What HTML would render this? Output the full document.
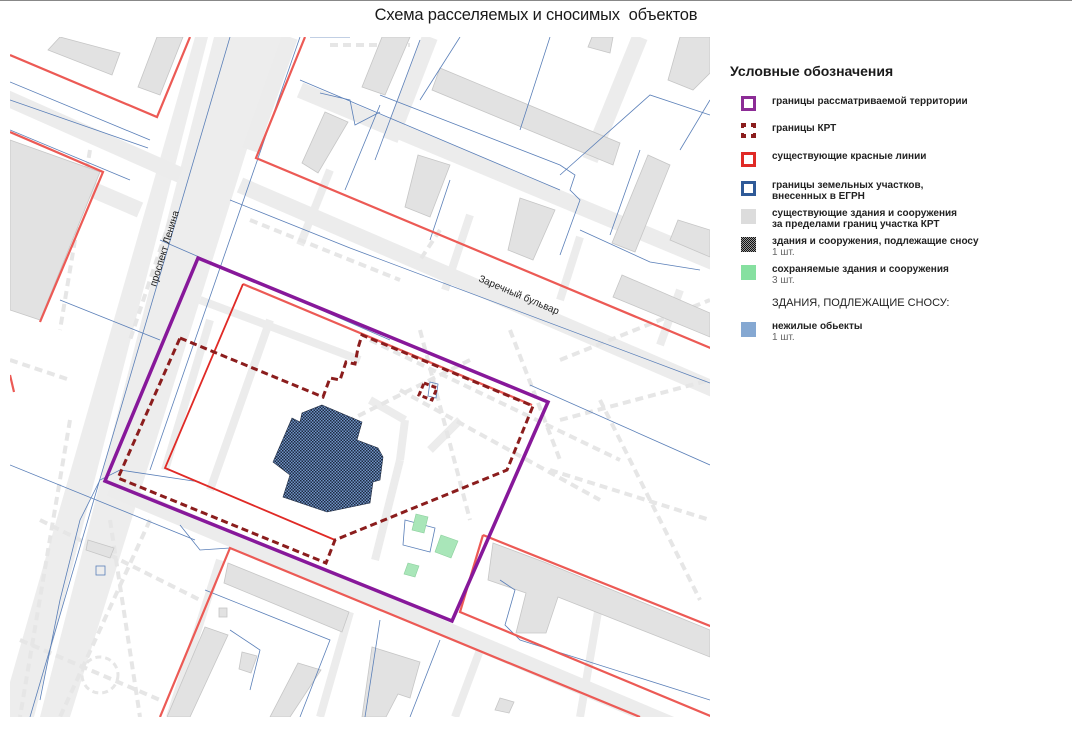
<!DOCTYPE html>
<html><head><meta charset="utf-8"><style>
html,body{margin:0;padding:0;background:#fff;width:1072px;height:738px;overflow:hidden;font-family:"Liberation Sans",sans-serif}
.t{position:absolute;left:0;width:1072px;top:6px;text-align:center;font-size:16.5px;color:#1a1a1a;letter-spacing:-0.2px}
.topline{position:absolute;left:0;top:0;width:1072px;height:1px;background:#888}
.lg{position:absolute;left:730px;top:63px;font-size:14px;color:#1a1a1a;font-weight:600}
.it{position:absolute;left:772px;font-size:10px;color:#222;line-height:11px;font-weight:600}
.it span{color:#666;font-weight:400}
.sw{position:absolute;left:741px;width:15px;height:15px;box-sizing:border-box}
</style></head><body>
<div class="topline"></div>
<div class="t">Схема расселяемых и сносимых&nbsp; объектов</div>
<svg width="1072" height="738" style="position:absolute;left:0;top:0">
<defs>
<clipPath id="c"><rect x="10" y="37" width="700" height="680"/></clipPath>
<pattern id="ch" width="3" height="3" patternUnits="userSpaceOnUse"><rect width="3" height="3" fill="#6f93c6"/><rect width="1.5" height="1.5" fill="#1e2a40"/><rect x="1.5" y="1.5" width="1.5" height="1.5" fill="#1e2a40"/></pattern>
</defs>
<g clip-path="url(#c)">
<polygon points="195,37 282,37 70,717 0,717" fill="#ededed"/>
<polygon points="208,37 214,37 40,717 34,717" fill="#fff"/>
<g stroke="#ececec" fill="none" stroke-width="16">
<line x1="240" y1="185" x2="720" y2="392"/>
<line x1="0" y1="95" x2="180" y2="175"/>
<line x1="0" y1="150" x2="140" y2="210"/>
<line x1="110" y1="488" x2="720" y2="745"/>
<line x1="290" y1="37" x2="250" y2="150"/>
<line x1="430" y1="37" x2="390" y2="140"/>
<line x1="640" y1="37" x2="590" y2="160"/>
<line x1="300" y1="90" x2="720" y2="265"/>
</g>
<g stroke="#ececec" fill="none" stroke-width="8">
<line x1="200" y1="300" x2="360" y2="360"/>
<line x1="210" y1="320" x2="165" y2="470"/>
<line x1="270" y1="320" x2="210" y2="490"/>
<line x1="370" y1="400" x2="405" y2="420"/>
<line x1="405" y1="420" x2="400" y2="460"/>
<line x1="400" y1="460" x2="375" y2="560"/>
<line x1="430" y1="450" x2="460" y2="420"/>
<line x1="470" y1="215" x2="445" y2="290"/>
<line x1="330" y1="170" x2="300" y2="245"/>
<line x1="580" y1="237" x2="560" y2="300"/>
<line x1="680" y1="290" x2="660" y2="345"/>
<line x1="220" y1="560" x2="170" y2="717"/>
<line x1="350" y1="612" x2="320" y2="717"/>
<line x1="480" y1="650" x2="455" y2="717"/>
<line x1="600" y1="600" x2="580" y2="717"/>
</g>
<g stroke="#e6e6e6" fill="none" stroke-width="4" stroke-dasharray="8 5">
<line x1="370" y1="340" x2="620" y2="460"/>
<line x1="400" y1="390" x2="600" y2="500"/>
<line x1="420" y1="330" x2="470" y2="520"/>
<line x1="510" y1="330" x2="560" y2="460"/>
<line x1="560" y1="360" x2="710" y2="300"/>
<line x1="560" y1="420" x2="710" y2="380"/>
<line x1="550" y1="470" x2="710" y2="520"/>
<line x1="600" y1="400" x2="700" y2="600"/>
<line x1="470" y1="360" x2="350" y2="420"/>
<line x1="10" y1="360" x2="70" y2="380"/>
<line x1="70" y1="420" x2="20" y2="717"/>
<line x1="40" y1="520" x2="200" y2="600"/>
<line x1="20" y1="640" x2="160" y2="700"/>
<line x1="110" y1="520" x2="140" y2="717"/>
<line x1="150" y1="520" x2="60" y2="717"/>
<line x1="90" y1="150" x2="60" y2="330"/>
<line x1="170" y1="220" x2="130" y2="340"/>
<line x1="250" y1="220" x2="400" y2="280"/>
<line x1="330" y1="45" x2="410" y2="45"/>
<line x1="440" y1="230" x2="420" y2="260"/>
</g>
<circle cx="100" cy="675" r="18" fill="none" stroke="#e6e6e6" stroke-width="3" stroke-dasharray="6 4"/>
<g fill="#e2e2e2" stroke="#c6c6c6" stroke-width="0.8">
<polygon points="10,140 100,172 40,320 10,310"/>
<polygon points="60,37 120,53 112,75 48,50"/>
<polygon points="157,37 183,37 160,95 138,87"/>
<polygon points="325,112 348,122 318,173 302,163"/>
<polygon points="382,37 410,37 385,95 362,87"/>
<polygon points="440,68 620,143 613,165 432,90"/>
<polygon points="418,155 450,165 430,217 405,207"/>
<polygon points="520,198 555,210 533,260 508,250"/>
<polygon points="592,37 613,37 610,53 588,47"/>
<polygon points="680,37 710,37 710,73 693,90 668,80"/>
<polygon points="648,155 670,165 635,252 612,243"/>
<polygon points="678,220 710,230 710,257 670,240"/>
<polygon points="622,275 710,313 710,337 613,297"/>
<polygon points="88,540 114,548 110,558 86,550"/>
<polygon points="228,563 349,612 342,632 224,583"/>
<polygon points="205,627 228,635 190,717 167,717"/>
<polygon points="298,663 321,670 290,717 270,717"/>
<polygon points="372,647 420,662 410,698 398,694 386,717 362,717"/>
<polygon points="493,543 544,562 710,630 710,657 558,597 546,633 516,633 526,593 488,580"/>
<polygon points="500,698 514,702 509,713 495,710"/>
<polygon points="242,652 257,656 251,673 239,669"/>
<rect x="219" y="608" width="8" height="9"/>
</g>
<g stroke="#5a7fb8" stroke-width="0.8" fill="none">
<line x1="230" y1="37" x2="30" y2="717"/>
<line x1="300" y1="37" x2="150" y2="470"/>
<line x1="10" y1="82" x2="150" y2="140"/>
<line x1="10" y1="100" x2="148" y2="148"/>
<line x1="10" y1="130" x2="130" y2="180"/>
<line x1="60" y1="300" x2="160" y2="340"/>
<line x1="160" y1="240" x2="390" y2="340"/>
<line x1="300" y1="80" x2="560" y2="190"/>
<line x1="350" y1="248" x2="710" y2="383"/>
<line x1="230" y1="200" x2="350" y2="248"/>
<line x1="310" y1="37" x2="350" y2="37"/>
<polyline points="320,93 350,100 355,125 380,112"/>
<line x1="380" y1="105" x2="345" y2="190"/>
<line x1="420" y1="40" x2="375" y2="160"/>
<polyline points="420,100 460,37"/>
<polyline points="380,95 560,165 575,175 570,190 580,200 560,255"/>
<line x1="520" y1="130" x2="550" y2="37"/>
<polyline points="560,175 650,95 710,115"/>
<polyline points="580,230 650,262 700,270"/>
<line x1="610" y1="235" x2="640" y2="150"/>
<line x1="450" y1="180" x2="430" y2="240"/>
<line x1="680" y1="150" x2="710" y2="100"/>
<line x1="530" y1="385" x2="710" y2="465"/>
<line x1="10" y1="465" x2="195" y2="540"/>
<polyline points="200,482 120,470 100,480 80,520 60,600 40,700"/>
<polyline points="180,525 200,550 230,548"/>
<polyline points="205,590 280,620 330,640 300,717"/>
<polyline points="230,630 260,650 250,690"/>
<polyline points="380,620 365,717"/>
<polyline points="440,640 410,717"/>
<polyline points="500,580 515,590 505,625 520,640 710,700"/>
<polygon points="405,520 435,528 430,552 403,545"/>
<rect x="96" y="566" width="9" height="9"/>
<polygon points="430,382 438,384 436,398 428,396"/>
</g>
<g stroke="#ec5a55" stroke-width="2.2" fill="none">
<polyline points="10,55 157,117 190,37"/>
<polyline points="10,132 103,172 40,322"/>
<polyline points="305,37 256,158 720,352"/>
<polyline points="483,535 460,612 720,720"/>
<polyline points="483,535 720,630"/>
<polyline points="160,717 230,548 640,717"/>
<line x1="10" y1="375" x2="14" y2="392"/>
<line x1="243" y1="284" x2="532" y2="405"/>
</g>
<polyline points="243,284 165,468 335,540" stroke="#e02a26" stroke-width="1.8" fill="none"/>
<polygon points="198,258 548,402 452,621 105,481" fill="none" stroke="#87189a" stroke-width="3.5"/>
<polygon points="180,338 323,397 330,378 340,380 346,362 355,364 358,348 362,335 533,406 507,470 335,540 326,563 118,478" fill="none" stroke="#8b1d1d" stroke-width="3" stroke-dasharray="7 4"/>
<polygon points="424,383 437,388 432,400 419,395" fill="none" stroke="#8b1d1d" stroke-width="3" stroke-dasharray="5 3"/>
<polygon points="322,405 362,422 357,440 378,448 383,457 380,480 373,482 370,503 327,512 283,497 290,475 273,462 292,418 300,422 302,413" fill="url(#ch)" stroke="#1e2a40" stroke-width="0.6"/>
<g fill="#a9e6b9" stroke="#8bcf9c" stroke-width="0.6">
<polygon points="416,514 428,517 424,533 412,530"/>
<polygon points="441,535 458,541 451,558 435,552"/>
<polygon points="408,563 419,566 415,577 404,574"/>
</g>
<text x="0" y="0" font-size="10" fill="#222" transform="translate(478,281) rotate(23)">Заречный бульвар</text>
<text x="0" y="0" font-size="10" fill="#222" transform="translate(156,287) rotate(-73)">проспект Ленина</text>
</g>
</svg>
<div class="lg">Условные обозначения</div>
<div class="sw" style="top:96px;border:3.5px solid #8c2c96"></div>
<div class="it" style="top:96px">границы рассматриваемой территории</div>
<svg class="sw" style="top:123px" width="15" height="15"><g fill="#8b1d1d"><rect x="0" y="0" width="5" height="4"/><rect x="10" y="0" width="5" height="4"/><rect x="0" y="11" width="5" height="4"/><rect x="10" y="11" width="5" height="4"/><rect x="0" y="0" width="3" height="5"/><rect x="12" y="0" width="3" height="5"/><rect x="0" y="10" width="3" height="5"/><rect x="12" y="10" width="3" height="5"/></g></svg>
<div class="it" style="top:123px">границы КРТ</div>
<div class="sw" style="top:152px;border:3.5px solid #e02a26"></div>
<div class="it" style="top:151px">существующие красные линии</div>
<div class="sw" style="top:181px;border:3.5px solid #2f5a98"></div>
<div class="it" style="top:180px">границы земельных участков,<br>внесенных в ЕГРН</div>
<div class="sw" style="top:209px;background:#dcdcdc"></div>
<div class="it" style="top:208px">существующие здания и сооружения<br>за пределами границ участка КРТ</div>
<svg class="sw" style="top:237px" width="15" height="15"><defs><pattern id="ch2" width="2" height="2" patternUnits="userSpaceOnUse"><rect width="2" height="2" fill="#999"/><rect width="1" height="1" fill="#111"/><rect x="1" y="1" width="1" height="1" fill="#111"/></pattern></defs><rect width="15" height="15" fill="url(#ch2)"/></svg>
<div class="it" style="top:236px">здания и сооружения, подлежащие сносу<br><span>1 шт.</span></div>
<div class="sw" style="top:265px;background:#86e0a0"></div>
<div class="it" style="top:264px">сохраняемые здания и сооружения<br><span>3 шт.</span></div>
<div class="it" style="top:298px;font-size:11px;font-weight:500">ЗДАНИЯ, ПОДЛЕЖАЩИЕ СНОСУ:</div>
<div class="sw" style="top:322px;background:#85a8d2"></div>
<div class="it" style="top:321px">нежилые обьекты<br><span>1 шт.</span></div>
</body></html>
